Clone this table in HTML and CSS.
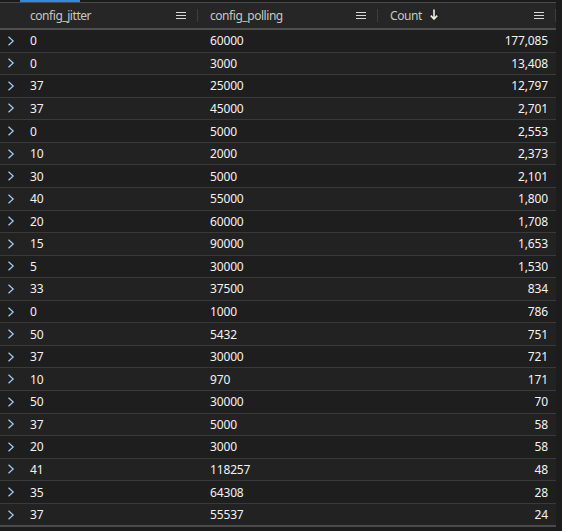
FILE: index.html
```html
<!DOCTYPE html>
<html>
<head>
<meta charset="utf-8">
<link rel="stylesheet" href="styles.css">
</head>
<body>
<div class="grid">
  <div class="topbar"><span class="tab"></span></div>
  <div class="row head">
    <div class="cell exp"></div>
    <div class="cell hcell"><span class="title">config_jitter</span><span class="menu"><i></i><i></i><i></i></span></div>
    <div class="cell hcell"><span class="title">config_polling</span><span class="menu"><i></i><i></i><i></i></span></div>
    <div class="cell hcell"><span class="title">Count<svg class="arrow" width="8" height="11" viewBox="0 0 8 11"><path d="M4 0.5 V10 M0.8 6.6 L4 10 L7.2 6.6" fill="none" stroke="#f4f0e2" stroke-width="1.6"/></svg></span><span class="menu"><i></i><i></i><i></i></span></div>
  </div>
  <div class="body" id="body"></div>
</div>
<script>
var data=[["0","60000","177,085"],["0","3000","13,408"],["37","25000","12,797"],["37","45000","2,701"],["0","5000","2,553"],["10","2000","2,373"],["30","5000","2,101"],["40","55000","1,800"],["20","60000","1,708"],["15","90000","1,653"],["5","30000","1,530"],["33","37500","834"],["0","1000","786"],["50","5432","751"],["37","30000","721"],["10","970","171"],["50","30000","70"],["37","5000","58"],["20","3000","58"],["41","118257","48"],["35","64308","28"],["37","55537","24"]];
var b=document.getElementById('body');var h='';
data.forEach(function(r){h+='<div class="row drow"><div class="cell exp"><svg width="8" height="10" viewBox="0 0 8 10"><path d="M1.5 0.8 L6.2 5 L1.5 9.2" fill="none" stroke="#a9cdf7" stroke-width="1.2"/></svg></div><div class="cell">'+r[0]+'</div><div class="cell">'+r[1]+'</div><div class="cell num">'+r[2]+'</div></div>';});
b.innerHTML=h;
</script>
</body>
</html>
```
FILE: styles.css
```css
html, body { margin: 0; padding: 0; background: #1c1c1c; }
body { font-family: "Noto Sans", "Open Sans", sans-serif; font-size: 12px; color: #f3f2f1; width: 562px; height: 531px; overflow: hidden; }
.grid { width: 556px; }
.topbar { height: 2px; background: #1b1b1b; border-bottom: 1px solid #4a4a4a; position: relative; }
.tab { position: absolute; left: 20px; top: 0; width: 60px; height: 2px; background: #2f8ae0; }
.row { display: grid; grid-template-columns: 18px 180px 180px 178px; }
.head { height: 25px; background: #262626; border-bottom: 2px solid #4e4e4e; }
.hcell { display: flex; align-items: center; justify-content: space-between; padding: 0 12px; position: relative; color: #c8c6c4; font-size: 12px; }
.title { display: flex; align-items: center; letter-spacing: -0.45px; }
.hcell::after { content: ""; position: absolute; right: 0; top: 6px; bottom: 6px; width: 1px; background: #3e3e3e; }
.menu { display: flex; flex-direction: column; gap: 2px; width: 10px; }
.menu i { display: block; height: 1px; background: #d6d6d6; }
.arrow { margin-left: 8px; margin-top: -2px; }
.drow { height: 21.57px; border-bottom: 1px solid #3a3a3a; background: #1e1e1e; }
.drow:nth-child(even) { background: #222222; }
.cell { display: flex; align-items: center; padding-left: 12px; white-space: nowrap; letter-spacing: -0.15px; }
.exp { padding-left: 7px; }
.num { justify-content: flex-end; padding-right: 8px; }
.body .drow:last-child { border-bottom: 2px solid #4a4a4a; }
```
